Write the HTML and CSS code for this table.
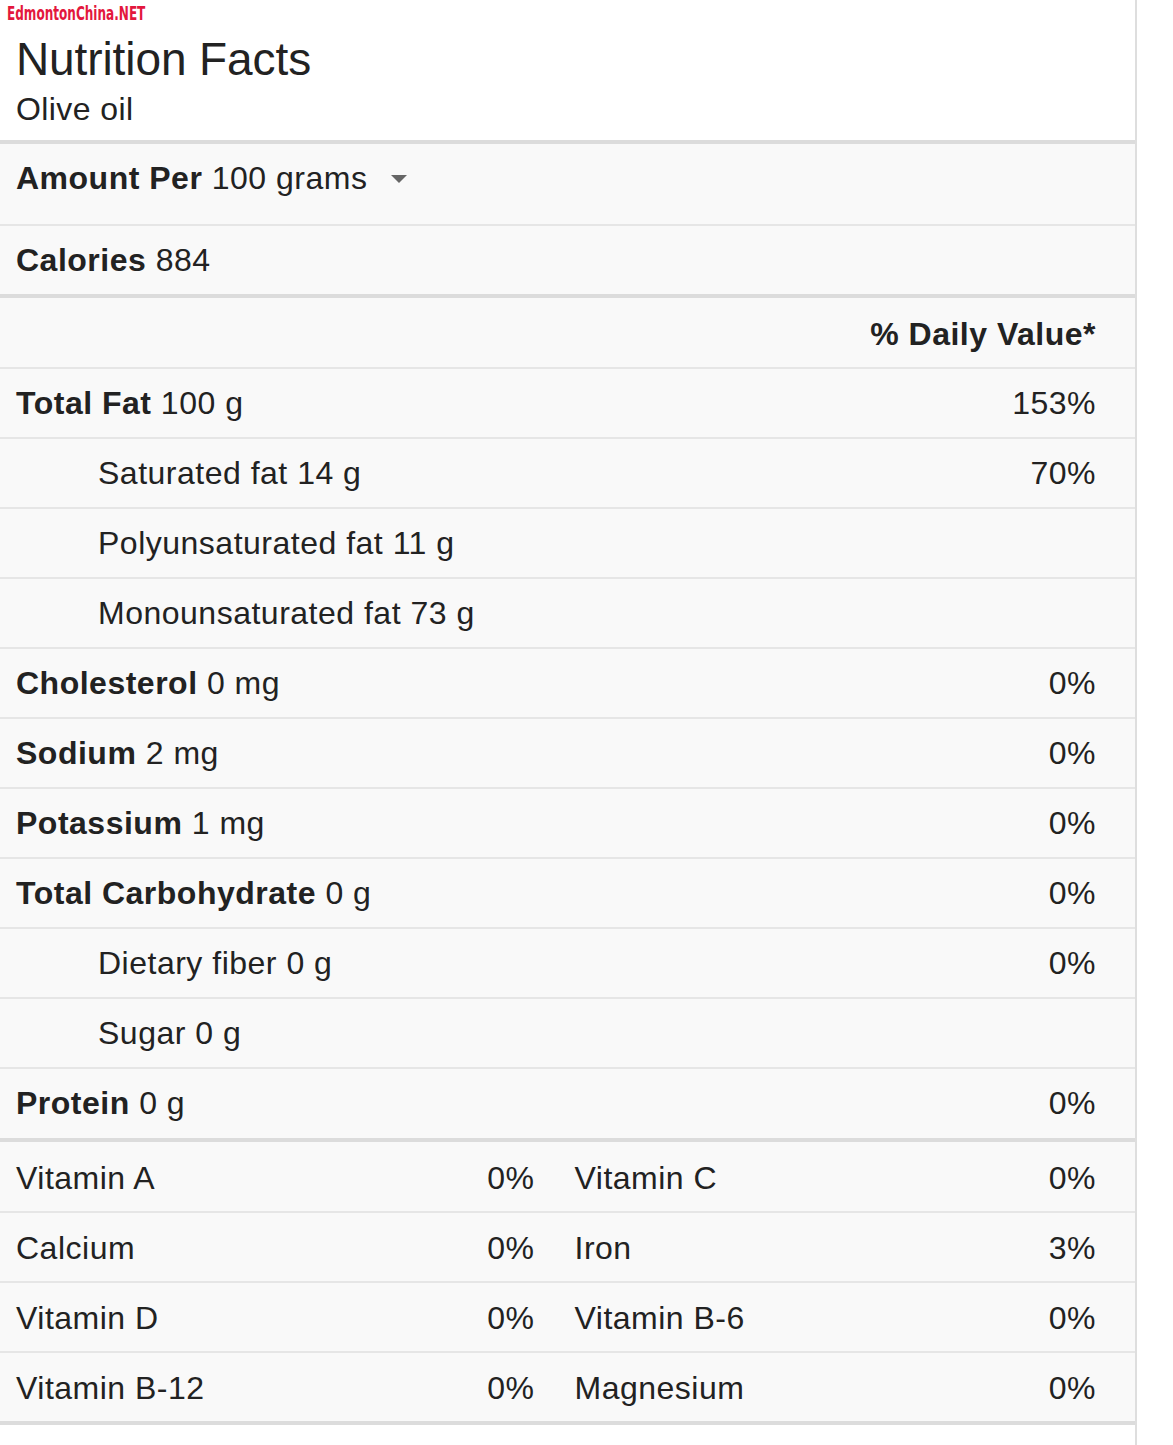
FILE: index.html
```html
<!DOCTYPE html>
<html lang="en">
<head>
<meta charset="utf-8">
<title>Nutrition Facts - Olive oil</title>
<link rel="stylesheet" href="styles.css">
</head>
<body>
<div class="panel">
  <header class="head">
    <div class="mark"><span class="mark-text">EdmontonChina.NET</span></div>
    <h1 class="title">Nutrition Facts</h1>
    <div class="subtitle">Olive oil</div>
  </header>

  <div class="row row-amount thick-top">
    <div><b>Amount Per</b> 100 grams<span class="caret"></span></div>
  </div>
  <div class="row thick-bottom">
    <div><b>Calories</b> 884</div>
  </div>
  <div class="row row-dv">
    <div></div>
    <div><b>% Daily Value*</b></div>
  </div>
  <div class="row"><div><b>Total Fat</b> 100 g</div><div>153%</div></div>
  <div class="row sub"><div>Saturated fat 14 g</div><div>70%</div></div>
  <div class="row sub"><div>Polyunsaturated fat 11 g</div><div></div></div>
  <div class="row sub"><div>Monounsaturated fat 73 g</div><div></div></div>
  <div class="row"><div><b>Cholesterol</b> 0 mg</div><div>0%</div></div>
  <div class="row"><div><b>Sodium</b> 2 mg</div><div>0%</div></div>
  <div class="row"><div><b>Potassium</b> 1 mg</div><div>0%</div></div>
  <div class="row"><div><b>Total Carbohydrate</b> 0 g</div><div>0%</div></div>
  <div class="row sub"><div>Dietary fiber 0 g</div><div>0%</div></div>
  <div class="row sub"><div>Sugar 0 g</div><div></div></div>
  <div class="row thick-bottom row-protein"><div><b>Protein</b> 0 g</div><div>0%</div></div>

  <div class="vrow vrow-first">
    <div class="vcell"><span>Vitamin A</span><span>0%</span></div>
    <div class="vcell"><span>Vitamin C</span><span>0%</span></div>
  </div>
  <div class="vrow">
    <div class="vcell"><span>Calcium</span><span>0%</span></div>
    <div class="vcell"><span>Iron</span><span>3%</span></div>
  </div>
  <div class="vrow">
    <div class="vcell"><span>Vitamin D</span><span>0%</span></div>
    <div class="vcell"><span>Vitamin B-6</span><span>0%</span></div>
  </div>
  <div class="vrow thick-bottom">
    <div class="vcell"><span>Vitamin B-12</span><span>0%</span></div>
    <div class="vcell"><span>Magnesium</span><span>0%</span></div>
  </div>
</div>
</body>
</html>
```

FILE: styles.css
```css
* { box-sizing: border-box; }

html, body {
  margin: 0;
  padding: 0;
  background: #ffffff;
}

body {
  font-family: "Liberation Sans", Arial, sans-serif;
  color: #222222;
}

.panel {
  width: 1137px;
  min-height: 1445px;
  border-right: 2px solid #dedede;
  background: #ffffff;
}

.head {
  padding: 0 16px 15px 16px;
  background: #ffffff;
}

.mark {
  height: 36px;
  padding-top: 2px;
  margin-left: -9px;
}

.mark-text {
  display: inline-block;
  font-family: "DejaVu Sans Condensed", "DejaVu Sans", sans-serif;
  font-weight: bold;
  font-size: 20px;
  line-height: 22px;
  color: #e3173d;
  transform: scaleX(0.67);
  transform-origin: left center;
}

.title {
  margin: 0;
  font-size: 46px;
  line-height: 46px;
  font-weight: normal;
  color: #222222;
  letter-spacing: -0.1px;
}

.subtitle {
  margin-top: 11px;
  font-size: 32px;
  line-height: 32px;
  letter-spacing: 0.4px;
}

.row {
  display: flex;
  justify-content: space-between;
  align-items: center;
  height: 70px;
  padding: 0 39px 0 16px;
  font-size: 32px;
  letter-spacing: 0.5px;
  background: #f9f9f9;
  border-bottom: 2px solid #e6e6e6;
}

.row b { font-weight: bold; }

.row.sub { padding-left: 98px; }

.thick-top { border-top: 4px solid #dcdcdc; }

.row.thick-bottom,
.vrow.thick-bottom { border-bottom: 4px solid #dcdcdc; }

.row.thick-bottom { height: 72px; }

.row.row-protein { height: 73px; }

.row-amount {
  height: 86px;
  align-items: flex-start;
  padding-top: 16px;
}

.row-dv {
  height: 71px;
  padding-top: 3px;
}

.caret {
  display: inline-block;
  width: 0;
  height: 0;
  margin-left: 24px;
  border-left: 8px solid transparent;
  border-right: 8px solid transparent;
  border-top: 8px solid #666666;
  vertical-align: 6px;
}

.vrow {
  display: grid;
  grid-template-columns: 518.5px 1fr;
  column-gap: 40px;
  height: 70px;
  padding: 3px 39px 0 16px;
  font-size: 32px;
  letter-spacing: 0.5px;
  background: #f9f9f9;
  border-bottom: 2px solid #e6e6e6;
  align-items: center;
}

.vrow.vrow-first { height: 71px; }

.vrow.thick-bottom { height: 72px; }

.vcell {
  display: flex;
  justify-content: space-between;
}
```
